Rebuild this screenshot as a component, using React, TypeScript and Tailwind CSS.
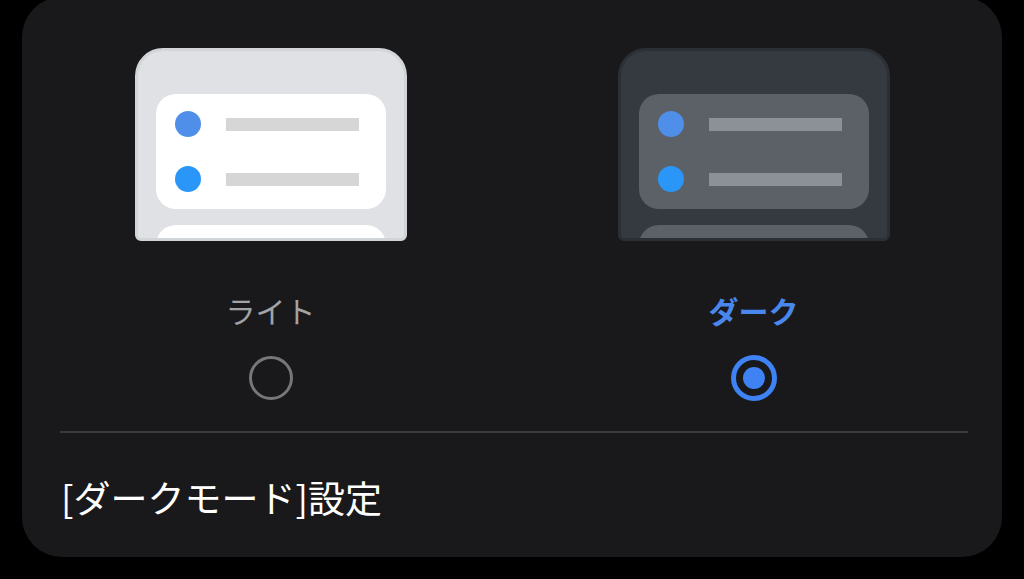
import React from 'react';

type Theme = 'light' | 'dark';

const palette = {
  light: {
    frame: 'border-[#d2d5d8] bg-[#dfe1e4]',
    card: 'bg-white',
    line: 'bg-[#d6d6d6]',
  },
  dark: {
    frame: 'border-[#2c2f34] bg-[#353a41]',
    card: 'bg-[#5b6167]',
    line: 'bg-[#8b9197]',
  },
};

const Preview: React.FC<{ theme: Theme }> = ({ theme }) => {
  const p = palette[theme];
  return (
    <div
      className={`flex h-[193px] w-[272px] flex-col gap-[16px] overflow-hidden rounded-t-[28px] rounded-b-[6px] border-[3px] px-[18px] pt-[43px] ${p.frame}`}
    >
      <div className={`flex h-[115px] shrink-0 flex-col gap-[29px] rounded-[20px] pl-[19px] pt-[17px] ${p.card}`}>
        <div className="flex items-center gap-[25px]">
          <span className="h-[26px] w-[26px] rounded-full bg-[#4f8ee9]" />
          <span className={`h-[13px] w-[133px] ${p.line}`} />
        </div>
        <div className="flex items-center gap-[25px]">
          <span className="h-[26px] w-[26px] rounded-full bg-[#2a96f7]" />
          <span className={`h-[13px] w-[133px] ${p.line}`} />
        </div>
      </div>
      <div className={`h-[60px] shrink-0 rounded-t-[20px] ${p.card}`} />
    </div>
  );
};

const ThemeOption: React.FC<{ theme: Theme; label: string; selected: boolean }> = ({
  theme,
  label,
  selected,
}) => (
  <div className="flex flex-col items-center">
    <Preview theme={theme} />
    <div
      className={`mt-[49px] h-[40px] text-[30px] leading-[40px] ${
        selected ? 'font-bold text-[#4a87ec]' : 'text-[#a3a3a5]'
      }`}
    >
      {label}
    </div>
    <div className="mt-[24px] flex h-[48px] items-center justify-center">
      {selected ? (
        <span className="flex h-[46px] w-[46px] items-center justify-center rounded-full border-[5px] border-[#3e82f4]">
          <span className="h-[22px] w-[22px] rounded-full bg-[#3e82f4]" />
        </span>
      ) : (
        <span className="h-[44px] w-[44px] rounded-full border-[3px] border-[#77777b]" />
      )}
    </div>
  </div>
);

export default function App() {
  return (
    <div className="h-[579px] w-full overflow-hidden bg-black font-['Noto_Sans_CJK_JP',sans-serif]">
      <div className="mx-[22px] -mt-[3px] h-[560px] rounded-[40px] bg-[#19191b]">
        <div className="grid grid-cols-2 px-[7px] pt-[51px]">
          <ThemeOption theme="light" label="ライト" selected={false} />
          <ThemeOption theme="dark" label="ダーク" selected />
        </div>
        <div className="ml-[38px] mr-[34px] mt-[29px] h-[2px] bg-[#3a3a3d]" />
        <div className="mt-[40px] pl-[39px] text-[37px] leading-[48px] text-white">
          [ダークモード]設定
        </div>
      </div>
    </div>
  );
}
